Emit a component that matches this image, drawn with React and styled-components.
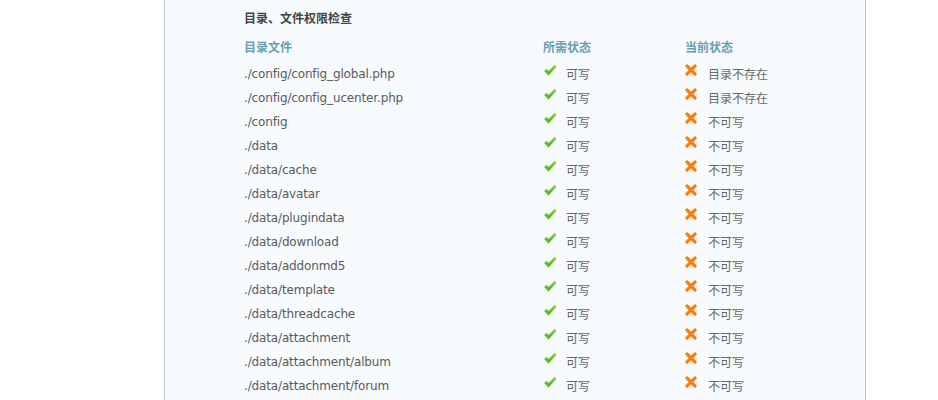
import React from 'react'
import styled, { createGlobalStyle } from 'styled-components'

const GlobalStyle = createGlobalStyle`
  body {
    margin: 0;
    background: #ffffff;
    font-family: "DejaVu Sans", "Noto Sans CJK SC", sans-serif;
  }
`

const rows = [
  ['./config/config_global.php', '目录不存在'],
  ['./config/config_ucenter.php', '目录不存在'],
  ['./config', '不可写'],
  ['./data', '不可写'],
  ['./data/cache', '不可写'],
  ['./data/avatar', '不可写'],
  ['./data/plugindata', '不可写'],
  ['./data/download', '不可写'],
  ['./data/addonmd5', '不可写'],
  ['./data/template', '不可写'],
  ['./data/threadcache', '不可写'],
  ['./data/attachment', '不可写'],
  ['./data/attachment/album', '不可写'],
  ['./data/attachment/forum', '不可写'],
]

function CheckIcon() {
  return (
    <svg width="14" height="13" viewBox="0 0 14 13">
      <defs>
        <linearGradient id="gc" x1="0" y1="0" x2="0" y2="1">
          <stop offset="0" stopColor="#8fd840" />
          <stop offset="1" stopColor="#4fa81a" />
        </linearGradient>
      </defs>
      <path d="M1 7 L3.5 4.8 L5.6 7 L11.6 0.8 L13.6 2.8 L5.6 11.6 Z" fill="url(#gc)" />
    </svg>
  )
}

function CrossIcon() {
  return (
    <svg width="12" height="12" viewBox="0 0 12 12">
      <path d="M2 2 L10 10 M10 2 L2 10" stroke="#f5820f" strokeWidth="3.2" strokeLinecap="round" />
    </svg>
  )
}

export default function App() {
  return (
    <>
      <GlobalStyle />
      <Panel>
        <Title>目录、文件权限检查</Title>
        <Grid>
          <Head>目录文件</Head>
          <Head>所需状态</Head>
          <Head>当前状态</Head>
          {rows.map(([path, state]) => (
            <React.Fragment key={path}>
              <Cell>
                <Path>{path}</Path>
              </Cell>
              <Cell>
                <Icon><CheckIcon /></Icon>
                <Cjk $gap={9}>可写</Cjk>
              </Cell>
              <Cell>
                <Icon><CrossIcon /></Icon>
                <Cjk $gap={11}>{state}</Cjk>
              </Cell>
            </React.Fragment>
          ))}
        </Grid>
      </Panel>
    </>
  )
}

const Panel = styled.div`
  margin-left: 164px;
  width: 702px;
  min-height: 400px;
  box-sizing: border-box;
  border-left: 1px solid #b3cdd8;
  border-right: 1px solid #b3cdd8;
  background: #f7fbfe;
  padding: 6px 0 0 79px;
`

const Title = styled.div`
  font-size: 12px;
  line-height: 24px;
  font-weight: bold;
  color: #444;
  font-family: "Noto Sans CJK SC", sans-serif;
`

const Grid = styled.div`
  display: grid;
  grid-template-columns: 299px 142px 1fr;
  margin-top: 5px;
`

const Head = styled.div`
  font-family: "Noto Sans CJK SC", sans-serif;
  font-size: 12px;
  font-weight: bold;
  line-height: 24px;
  color: #6a9eb2;
`

const Cell = styled.div`
  display: flex;
  align-items: center;
  height: 24px;
  font-size: 12px;
  color: #5a5a5a;
`

const Path = styled.span`
  padding-top: 6px;
  letter-spacing: -0.15px;
`

const Icon = styled.span`
  display: flex;
  margin-top: -2px;
`

const Cjk = styled.span`
  margin-left: ${p => p.$gap}px;
  font-family: "Noto Sans CJK SC", sans-serif;
  color: #666;
  margin-top: 4px;
`
